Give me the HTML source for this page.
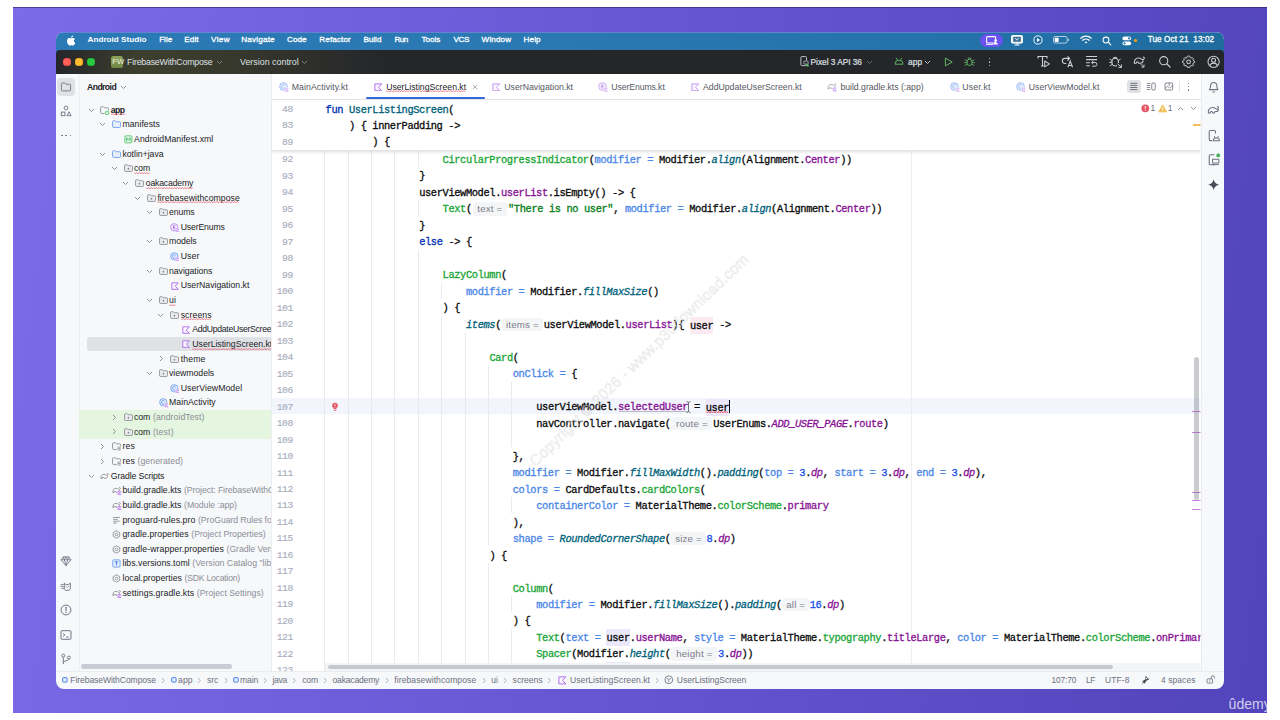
<!DOCTYPE html>
<html lang="en"><head><meta charset="utf-8"><title>Android Studio - UserListingScreen.kt</title>
<style>
html,body{margin:0;padding:0;background:#fff;}
body{width:1280px;height:720px;position:relative;overflow:hidden;font-family:"Liberation Sans",sans-serif;}
#bg{position:absolute;left:13px;top:7px;width:1254px;height:706px;background:linear-gradient(97deg,#7d6ae8 0%,#6755d2 50%,#5244bb 100%);}
#bg:before{content:"";position:absolute;left:0;top:0;right:0;height:1px;background:rgba(40,30,90,.55);}
#win{position:absolute;left:0;top:0;width:1280px;height:720px;clip-path:inset(32px 56px 31px 56px round 8px);}
#win div,#win span,#win svg{position:absolute;}
#win span{white-space:pre;line-height:12px;}
.wv{text-decoration:underline wavy #e8606e;text-decoration-thickness:.6px;text-underline-offset:1.6px;text-decoration-skip-ink:none;}
.cl{font-family:"Liberation Mono",monospace;font-size:10.4px;letter-spacing:-.390px;line-height:14px !important;color:#0b0b0c;-webkit-text-stroke:.3px currentColor;}
.ln{font-family:"Liberation Mono",monospace;font-size:9.7px;letter-spacing:-.400px;line-height:14px !important;color:#a9aebd;-webkit-text-stroke:.15px currentColor;}
.cl i{font-style:normal;}
.cl .k{color:#0033b3;}.cl .f{color:#00627a;}.cl .c{color:#17a535;}.cl .s{color:#067d17;}
.cl .a{color:#4a86e8;}.cl .p{color:#871094;}.cl .pi{color:#871094;font-style:italic;}
.cl .e{color:#00627a;font-style:italic;}.cl .n{color:#1750eb;}
.cl .hp{background:#fbeaf2;padding:2.6px 0 2.4px;}.cl .hv{background:#ece8fb;padding:2.6px 0 2.4px;}
.cl .h{display:inline-block;box-sizing:border-box;height:13.4px;line-height:13.2px;margin:0 .8px;vertical-align:.4px;background:#f4f5f7;border-radius:2.5px;color:#7b7e88;font-family:"Liberation Sans",sans-serif;font-size:9.7px;letter-spacing:.2px;-webkit-text-stroke:0;text-align:center;}
.ul{text-decoration:underline;text-decoration-color:#8a8d96;text-decoration-thickness:.6px;text-underline-offset:1.4px;}
</style></head><body>
<div id="bg"></div>
<div id="win">
<div style="left:56px;top:32px;width:1168px;height:657px;background:#f7f8fa;"></div>
<div style="left:56px;top:32px;width:1168px;height:24px;background:linear-gradient(90deg,#2b7ab6 0%,#2a79b3 40%,#2473aa 75%,#1f6c9f 100%);"></div>
<div style="left:56px;top:32px;width:1168px;height:1px;background:rgba(150,140,240,.55);"></div>
<div style="left:56px;top:50px;width:1168px;height:23.7px;background:#25262a;border-radius:4px 4px 0 0;"></div>
<div style="left:56px;top:50px;width:330px;height:23.7px;background:linear-gradient(90deg,rgba(75,78,40,0) 0%,rgba(84,86,48,.52) 26%,rgba(80,82,48,.40) 55%,rgba(60,62,40,0) 100%);border-radius:4px 0 0 0;"></div>
<div style="left:271.5px;top:73.7px;width:929px;height:598px;background:#ffffff;"></div>
<div style="left:78.6px;top:73.7px;width:1px;height:597.5px;background:#eeeff2;"></div>
<div style="left:271px;top:73.7px;width:1px;height:597.5px;background:#ecedf0;"></div>
<div style="left:1200.5px;top:73.7px;width:1px;height:597.5px;background:#ebecf0;"></div>
<div style="left:56px;top:671px;width:1168px;height:1px;background:#ebecf0;"></div>
<div style="left:271.5px;top:99px;width:929px;height:1px;background:#e4e5e9;"></div>
<svg style="left:66px;top:34.6px;" width="10" height="11" viewBox="0 0 10 11" fill="none"><path fill="#fff" d="M7.9 5.85c0-1.3 1.05-1.9 1.1-1.95-.6-.87-1.53-1-1.86-1-.8-.08-1.55.47-1.95.47-.4 0-1.02-.46-1.68-.45-.86.01-1.66.5-2.1 1.28-.9 1.55-.23 3.85.64 5.1.43.62.93 1.3 1.6 1.28.64-.03.88-.41 1.66-.41.77 0 .99.41 1.67.4.69-.01 1.13-.62 1.55-1.24.49-.71.69-1.4.7-1.44-.02 0-1.34-.51-1.35-2.04zM6.63 2.07c.35-.43.59-1.02.52-1.62-.51.02-1.12.34-1.49.77-.32.38-.61.99-.53 1.57.57.05 1.15-.29 1.5-.72z"/></svg>
<span style="top:33.70px;font-size:8.1px;color:#ffffff;left:87.60px;letter-spacing:0.027px;font-weight:700;">Android Studio</span>
<span style="top:33.70px;font-size:8.1px;color:#ffffff;left:159.20px;letter-spacing:-0.014px;-webkit-text-stroke:.3px #fff;">File</span>
<span style="top:33.70px;font-size:8.1px;color:#ffffff;left:184.20px;letter-spacing:0.151px;-webkit-text-stroke:.3px #fff;">Edit</span>
<span style="top:33.70px;font-size:8.1px;color:#ffffff;left:211.00px;letter-spacing:0.401px;-webkit-text-stroke:.3px #fff;">View</span>
<span style="top:33.70px;font-size:8.1px;color:#ffffff;left:241.20px;letter-spacing:0.208px;-webkit-text-stroke:.3px #fff;">Navigate</span>
<span style="top:33.70px;font-size:8.1px;color:#ffffff;left:287.00px;letter-spacing:0.084px;-webkit-text-stroke:.3px #fff;">Code</span>
<span style="top:33.70px;font-size:8.1px;color:#ffffff;left:319.30px;letter-spacing:0.116px;-webkit-text-stroke:.3px #fff;">Refactor</span>
<span style="top:33.70px;font-size:8.1px;color:#ffffff;left:363.40px;-webkit-text-stroke:.3px #fff;">Build</span>
<span style="top:33.70px;font-size:8.1px;color:#ffffff;left:394.50px;letter-spacing:-0.524px;-webkit-text-stroke:.3px #fff;">Run</span>
<span style="top:33.70px;font-size:8.1px;color:#ffffff;left:421.40px;letter-spacing:0.027px;-webkit-text-stroke:.3px #fff;">Tools</span>
<span style="top:33.70px;font-size:8.1px;color:#ffffff;left:453.60px;letter-spacing:-0.471px;-webkit-text-stroke:.3px #fff;">VCS</span>
<span style="top:33.70px;font-size:8.1px;color:#ffffff;left:481.60px;letter-spacing:0.143px;-webkit-text-stroke:.3px #fff;">Window</span>
<span style="top:33.70px;font-size:8.1px;color:#ffffff;left:523.60px;letter-spacing:0.118px;-webkit-text-stroke:.3px #fff;">Help</span>
<div style="left:979.8px;top:33.8px;width:22.8px;height:13px;background:#6a52f2;border-radius:6.5px;"></div>
<svg style="left:985.5px;top:36px;" width="12" height="9" viewBox="0 0 12 9" fill="none"><rect x=".6" y=".6" width="9" height="6.4" rx="1" stroke="#fff" stroke-width="1.1"/><circle cx="9.6" cy="4.6" r="1.3" fill="#fff"/><path d="M7.2 8.6c.2-1.5 1.2-2.1 2.4-2.1s2.2.6 2.4 2.1z" fill="#fff"/><path d="M0 8.4h7" stroke="#fff" stroke-width=".9"/></svg>
<svg style="left:1010.5px;top:35px;" width="12" height="11" viewBox="0 0 12 11" fill="none"><rect x=".5" y=".5" width="11" height="7.6" rx="1" fill="#e9f1f7" stroke="#fff"/><rect x="2.2" y="1.8" width="7.6" height="5" fill="#3d6f94"/><path d="M4.2 3l1.8 2.2L7.8 3" stroke="#fff" stroke-width=".8"/><path d="M6 8.1v1.6M3.5 10h5" stroke="#fff" stroke-width="1"/></svg>
<svg style="left:1032.5px;top:35.2px;" width="10" height="10" viewBox="0 0 10 10" fill="none"><circle cx="5" cy="5" r="4.1" stroke="#fff" stroke-width=".9"/><path d="M4 3.1v3.8L7.1 5z" fill="#fff"/></svg>
<svg style="left:1053px;top:36.2px;" width="17" height="8" viewBox="0 0 17 8" fill="none"><rect x=".5" y=".5" width="13.6" height="6.6" rx="1.8" stroke="rgba(255,255,255,.75)" stroke-width=".9"/><rect x="1.7" y="1.7" width="4" height="4.2" rx=".9" fill="#fff"/><path d="M15.2 2.6v2.6c.7-.2 1-.7 1-1.3s-.3-1.1-1-1.3z" fill="rgba(255,255,255,.75)"/></svg>
<svg style="left:1079.5px;top:35.4px;" width="12" height="9" viewBox="0 0 12 9" fill="none"><path d="M.8 3.2a7.4 7.4 0 0 1 10.4 0" stroke="#fff" stroke-width="1.25" stroke-linecap="round"/><path d="M2.8 5.3a4.6 4.6 0 0 1 6.4 0" stroke="#fff" stroke-width="1.25" stroke-linecap="round"/><path d="M4.7 7.2a1.9 1.9 0 0 1 2.6 0L6 8.6z" fill="#fff"/></svg>
<svg style="left:1101.8px;top:35.6px;" width="10" height="10" viewBox="0 0 10 10" fill="none"><circle cx="4" cy="4" r="2.9" stroke="#fff" stroke-width="1.05"/><path d="M6.2 6.2l2.6 2.6" stroke="#fff" stroke-width="1.2" stroke-linecap="round"/></svg>
<svg style="left:1122px;top:35.6px;" width="10" height="10" viewBox="0 0 10 10" fill="none"><rect x=".5" y=".6" width="8.6" height="3.7" rx="1.85" fill="#fff"/><circle cx="7.1" cy="2.45" r="1.1" fill="#2a76ad"/><rect x=".5" y="5.5" width="8.6" height="3.7" rx="1.85" fill="#fff"/><circle cx="2.5" cy="7.35" r="1.1" fill="#2a76ad"/></svg>
<div style="left:1134.3px;top:39.2px;width:2.6px;height:2.6px;background:#ff9f0a;border-radius:2px;"></div>
<span style="top:33.70px;font-size:8.2px;color:#fff;left:1147.70px;letter-spacing:0.073px;-webkit-text-stroke:.3px #fff;">Tue Oct 21  13:02</span>
<div style="left:63.0px;top:58.199999999999996px;width:7.6px;height:7.6px;background:#ff5f57;border-radius:50%;box-shadow:inset 0 0 0 .4px #e0443e;"></div>
<div style="left:75.10000000000001px;top:58.199999999999996px;width:7.6px;height:7.6px;background:#febc2e;border-radius:50%;box-shadow:inset 0 0 0 .4px #dea123;"></div>
<div style="left:87.10000000000001px;top:58.199999999999996px;width:7.6px;height:7.6px;background:#28c840;border-radius:50%;box-shadow:inset 0 0 0 .4px #1aab29;"></div>
<div style="left:111.3px;top:55.8px;width:12px;height:12px;background:linear-gradient(180deg,#8fa35c,#6f8840);border-radius:2.6px;"></div>
<span style="top:55.90px;font-size:7.7px;color:#eef2e2;left:112.30px;font-family:"Liberation Mono", monospace;letter-spacing:-.45px;">FW</span>
<span style="top:55.50px;font-size:8.8px;color:#dfe1e5;left:127.00px;letter-spacing:-0.209px;">FirebaseWithCompose</span>
<svg style="left:215.5px;top:59.6px;" width="7" height="5" viewBox="0 0 7 5" fill="none"><path d="M1 1l2.5 2.5L6 1" stroke="#868a91" stroke-width=".9"/></svg>
<span style="top:55.50px;font-size:8.8px;color:#dfe1e5;left:240.00px;letter-spacing:0.037px;">Version control</span>
<svg style="left:300.8px;top:59.6px;" width="7" height="5" viewBox="0 0 7 5" fill="none"><path d="M1 1l2.5 2.5L6 1" stroke="#868a91" stroke-width=".9"/></svg>
<svg style="left:799.5px;top:56.4px;" width="9" height="11" viewBox="0 0 9 11" fill="none"><rect x=".9" y=".6" width="5.6" height="9" rx=".9" stroke="#ced0d6" stroke-width=".9"/><rect x="3.4" y="4.6" width="4.8" height="3.6" fill="#25262a"/><rect x="3.9" y="5.1" width="4.2" height="3" rx=".5" stroke="#ced0d6" stroke-width=".7"/><circle cx="7.6" cy="9.4" r="1.2" fill="#57c55b"/></svg>
<span style="top:55.50px;font-size:8.3px;color:#dfe1e5;left:810.60px;letter-spacing:-0.024px;-webkit-text-stroke:.2px #dfe1e5;">Pixel 3 API 36</span>
<svg style="left:866px;top:59.6px;" width="7" height="5" viewBox="0 0 7 5" fill="none"><path d="M1 1l2.5 2.5L6 1" stroke="#6f737a" stroke-width=".9"/></svg>
<svg style="left:894.3px;top:57.2px;" width="10" height="8" viewBox="0 0 10 8" fill="none"><path d="M1 7.2a4 4 0 0 1 8 0z" stroke="#5fb865" stroke-width=".95" stroke-linejoin="round"/><path d="M2.3 1l1.1 1.9M7.7 1L6.6 2.9" stroke="#5fb865" stroke-width=".9" stroke-linecap="round"/></svg>
<span style="top:55.50px;font-size:8.3px;color:#dfe1e5;left:908.00px;letter-spacing:0.178px;-webkit-text-stroke:.2px #dfe1e5;">app</span>
<svg style="left:924.3px;top:59.6px;" width="7" height="5" viewBox="0 0 7 5" fill="none"><path d="M1 1l2.5 2.5L6 1" stroke="#ced0d6" stroke-width=".9"/></svg>
<svg style="left:943.6px;top:56.8px;" width="10" height="10" viewBox="0 0 10 10" fill="none"><path d="M1.4 1.1v7.8L8.2 5z" stroke="#5fb865" stroke-width="1" stroke-linejoin="round"/></svg>
<svg style="left:964.2px;top:56.3px;" width="11" height="11" viewBox="0 0 11 11" fill="none"><ellipse cx="5.5" cy="6.3" rx="2.6" ry="3.2" stroke="#5fb865" stroke-width=".95"/><path d="M4 2.9a1.6 1.6 0 0 1 3 0" stroke="#5fb865" stroke-width=".9"/><path d="M2.9 5L.9 4M2.8 6.6H.6M3 8.3l-2 1.1M8.1 5l2-1M8.2 6.6h2.2M8 8.3l2 1.1" stroke="#5fb865" stroke-width=".8" stroke-linecap="round"/></svg>
<div style="left:988.6px;top:57.699999999999996px;width:1.5px;height:1.5px;background:#ced0d6;border-radius:1px;"></div>
<div style="left:988.6px;top:61.099999999999994px;width:1.5px;height:1.5px;background:#ced0d6;border-radius:1px;"></div>
<div style="left:988.6px;top:64.5px;width:1.5px;height:1.5px;background:#ced0d6;border-radius:1px;"></div>
<svg style="left:1036.7px;top:55.099999999999994px;" width="13.2" height="13.2" viewBox="0 0 12 12" fill="none"><path d="M.9 3.1V1.300h8.200v1.800M5 1.300v8.600M3.600 10h2.800" stroke="#ced0d6" stroke-width="1"/><path d="M7 5.400v5.400L11.300 8.100z" stroke="#ced0d6" stroke-width=".95" stroke-linejoin="round" fill="#25262a"/></svg>
<svg style="left:1060.9px;top:55.099999999999994px;" width="13.2" height="13.2" viewBox="0 0 12 12" fill="none"><path d="M7.600 3.100H3.500a2.300 2.300 0 0 0 0 4.600h.9" stroke="#ced0d6" stroke-width="1" stroke-linecap="round"/><path d="M5.900 1.200l1.900 1.900-1.900 1.900" stroke="#ced0d6" stroke-width="1"/><path d="M6.300 11.200l2.100-5.600 2.100 5.600M7 9.500h2.800" stroke="#ced0d6" stroke-width="1"/></svg>
<svg style="left:1085.1000000000001px;top:55.099999999999994px;" width="13.2" height="13.2" viewBox="0 0 12 12" fill="none"><path d="M1 1.4h10M1 4.2h10M1 7h3.4M1 9.8h3.4" stroke="#ced0d6" stroke-width=".95"/><path d="M6 6.8h3.2a1.7 1.7 0 0 1 0 3.4H6.6M7.6 5.4L6 6.8l1.6 1.4" stroke="#ced0d6" stroke-width=".9"/></svg>
<svg style="left:1109.4px;top:55.099999999999994px;" width="13.2" height="13.2" viewBox="0 0 12 12" fill="none"><ellipse cx="5.600" cy="6.500" rx="3" ry="3.500" stroke="#ced0d6" stroke-width="1"/><path d="M3.900 3.200a1.800 1.800 0 0 1 3.400 0" stroke="#ced0d6" stroke-width=".95"/><path d="M2.700 5L.9 3.900M2.600 6.700H.5M2.800 8.600L1 9.800M8.500 5l1.800-1.100" stroke="#ced0d6" stroke-width=".85" stroke-linecap="round"/><rect x="7.400" y="7.400" width="4.600" height="4.600" fill="#25262a"/><path d="M8 8l3.200 3.200M11.300 8.600v2.700H8.600" stroke="#ced0d6" stroke-width=".9"/></svg>
<svg style="left:1133.4px;top:55.099999999999994px;" width="13.2" height="13.2" viewBox="0 0 12 12" fill="none"><path d="M1.2 7.6c-.4-2.6 1.2-4.8 3.8-4.8 1.6 0 2.4.7 3.2 1.2.9.5 2.1-.2 2.1-1.2 0-.6-.5-1-1-1" stroke="#ced0d6" stroke-width=".95" stroke-linecap="round"/><path d="M1.2 7.6h1.6l.5-1.2h1.3l.5 1.2h1.5c1.7 0 2.6-1.3 2.6-2.8" stroke="#ced0d6" stroke-width=".95" stroke-linejoin="round"/><path d="M7 8.2l2.8 2.8M10 8.6V11H7.6" stroke="#ced0d6" stroke-width=".85"/></svg>
<svg style="left:1158.1000000000001px;top:55.099999999999994px;" width="13.2" height="13.2" viewBox="0 0 12 12" fill="none"><circle cx="5.2" cy="5.2" r="3.7" stroke="#ced0d6" stroke-width="1"/><path d="M8 8l3 3" stroke="#ced0d6" stroke-width="1.1" stroke-linecap="round"/></svg>
<svg style="left:1182.4px;top:55.099999999999994px;" width="13.2" height="13.2" viewBox="0 0 12 12" fill="none"><path d="M6 .9l1.2.3.4 1.2 1.1.6 1.2-.4.9.9-.4 1.2.6 1.1 1.2.4v1.2l-1.2.4-.6 1.1.4 1.2-.9.9-1.2-.4-1.1.6-.4 1.2H4.800l-.4-1.200-1.100-.600-1.200.400-.900-.900.400-1.200-.600-1.100L-.2 7.400V6.200l1.200-.400.600-1.100-.400-1.200.900-.900 1.200.400 1.100-.600.400-1.200z" transform="translate(.6 .1) scale(.9)" stroke="#ced0d6" stroke-width="1" stroke-linejoin="round"/><circle cx="6" cy="6.2" r="1.7" stroke="#ced0d6" stroke-width=".95"/></svg>
<svg style="left:1207.0px;top:55.099999999999994px;" width="13.2" height="13.2" viewBox="0 0 12 12" fill="none"><circle cx="6" cy="6.2" r="5.1" stroke="#ced0d6" stroke-width=".95"/><circle cx="6" cy="4.8" r="1.8" stroke="#ced0d6" stroke-width=".95"/><path d="M2.5 9.8c.6-1.7 1.900-2.400 3.500-2.400s2.900.7 3.500 2.400" stroke="#ced0d6" stroke-width=".95"/></svg>
<div style="left:57.2px;top:77.5px;width:18.1px;height:18.1px;background:#dfe1e5;border-radius:4px;"></div>
<svg style="left:60.3px;top:80.8px;" width="12" height="12" viewBox="0 0 12 12" fill="none"><path transform="translate(.6 .5) scale(.9)" d="M.9 2.6c0-.6.4-1 1-1h2.600l1.300 1.400h4.300c.6 0 1 .4 1 1v5.400c0 .6-.4 1-1 1H1.900c-.6 0-1-.4-1-1z" stroke="#6c707e" stroke-width=".95" stroke-linejoin="round"/></svg>
<svg style="left:60.3px;top:105.0px;" width="12" height="12" viewBox="0 0 12 12" fill="none"><circle cx="6" cy="3" r="1.9" stroke="#6c707e" stroke-width=".9"/><rect x="1.300" y="7.100" width="3.600" height="3.600" stroke="#6c707e" stroke-width=".9"/><path d="M9 6.800l2.100 3.900H6.900z" stroke="#6c707e" stroke-width=".9" stroke-linejoin="round"/></svg>
<div style="left:61.3px;top:134.5px;width:1.8px;height:1.8px;background:#6c707e;border-radius:1px;"></div>
<div style="left:65.39999999999999px;top:134.5px;width:1.8px;height:1.8px;background:#6c707e;border-radius:1px;"></div>
<div style="left:69.49999999999999px;top:134.5px;width:1.8px;height:1.8px;background:#6c707e;border-radius:1px;"></div>
<svg style="left:60.3px;top:555.2px;" width="12" height="12" viewBox="0 0 12 12" fill="none"><path d="M3.300 1.800h5.400L11 4.800 6 10.600 1 4.800zM1 4.800h10M4.300 4.800L6 10.600l1.700-5.800M3.300 1.800l1 3 1.700-3 1.700 3 1-3" stroke="#6c707e" stroke-width=".8" stroke-linejoin="round"/></svg>
<svg style="left:60.3px;top:580.2px;" width="12" height="12" viewBox="0 0 12 12" fill="none"><path d="M4.300 3.100l1.700 1.500h2.600l1.700-1.500v5.200c0 1.200-.9 2.100-2.100 2.100H6.400c-1.200 0-2.100-.900-2.100-2.100z" stroke="#6c707e" stroke-width=".9" stroke-linejoin="round"/><path d="M.6 4.600h3M.6 6.600h3M1.600 8.600h2.200" stroke="#6c707e" stroke-width=".85"/><path d="M6.200 6.600l.5.500M8.400 6.600l-.5.500" stroke="#6c707e" stroke-width=".8" stroke-linecap="round"/></svg>
<svg style="left:60.3px;top:604.2px;" width="12" height="12" viewBox="0 0 12 12" fill="none"><circle cx="6" cy="6" r="4.900" stroke="#6c707e" stroke-width=".95"/><path d="M6 3.200v3.500" stroke="#6c707e" stroke-width="1.100" stroke-linecap="round"/><circle cx="6" cy="8.500" r=".7" fill="#6c707e"/></svg>
<svg style="left:60.3px;top:628.8px;" width="12" height="12" viewBox="0 0 12 12" fill="none"><rect x="1" y="1.700" width="10" height="8.600" rx="1" stroke="#6c707e" stroke-width=".95"/><path d="M3 4.300l1.900 1.600L3 7.500M6.100 8.100h2.600" stroke="#6c707e" stroke-width=".9"/></svg>
<svg style="left:60.3px;top:652.8px;" width="12" height="12" viewBox="0 0 12 12" fill="none"><circle cx="3.300" cy="2.600" r="1.500" stroke="#6c707e" stroke-width=".9"/><circle cx="8.900" cy="4.600" r="1.500" stroke="#6c707e" stroke-width=".9"/><path d="M3.300 4.100v7M3.300 9.400c0-1.900 5.600-1.300 5.600-3.300" stroke="#6c707e" stroke-width=".9"/></svg>
<div style="left:0;top:0;width:1280px;height:720px;clip-path:inset(73.7px 1009px 49px 79px);">
<span style="top:80.70px;font-size:8.7px;color:#1b1c1f;left:87.00px;letter-spacing:-0.599px;font-weight:700;">Android</span>
<svg style="left:119.6px;top:85px;" width="7" height="5" viewBox="0 0 7 5" fill="none"><path d="M1 1l2.500 2.500L6 1" stroke="#7f838c" stroke-width=".9"/></svg>
<div style="left:79.3px;top:410.2px;width:192px;height:29.2px;background:#e4f6df;"></div>
<div style="left:87px;top:337px;width:184px;height:13.7px;background:#dfe1e5;border-radius:3px 0 0 3px;"></div>
<svg style="left:87.5px;top:107.7px;" width="7" height="5" viewBox="0 0 7 5" fill="none"><path d="M1 1l2.500 2.500L6 1" stroke="#7f838c" stroke-width=".9"/></svg>
<svg style="left:100.25px;top:105.75px;" width="9.3" height="9.3" viewBox="0 0 10 10" fill="none"><path d="M.6 1.700c0-.5.400-.9.900-.9h2.100l1 1.100h3.700c.5 0 .9.400.9.900v4.300c0 .5-.4.900-.9.900H1.500c-.5 0-.9-.4-.9-.9z" stroke="#7f838c" stroke-width=".85" stroke-linejoin="round"/><rect x="5" y="4.800" width="5" height="5" fill="#f7f8fa"/><rect x="6" y="5.800" width="3.300" height="3.300" rx=".3" fill="#dff5e4" stroke="#4fc36b" stroke-width=".85"/></svg>
<span style="top:103.70px;font-size:8.7px;color:#1b1c1f;left:110.80px;letter-spacing:-0.647px;font-weight:700;">app</span>
<svg style="left:110.80px;top:113.35px;" width="15.3" height="2.6" viewBox="0 0 15.3 2.6" fill="none"><path d="M0.0 0.5L1.3 2.0L2.6 0.5L3.9 2.0L5.2 0.5L6.5 2.0L7.8 0.5L9.1 2.0L10.4 0.5L11.7 2.0L13.0 0.5L14.3 2.0" stroke="#e5505f" stroke-width="0.62"/></svg>
<svg style="left:99.15px;top:122.336px;" width="7" height="5" viewBox="0 0 7 5" fill="none"><path d="M1 1l2.500 2.500L6 1" stroke="#7f838c" stroke-width=".9"/></svg>
<svg style="left:111.9px;top:120.386px;" width="9.3" height="8.37" viewBox="0 0 10 9" fill="none"><path d="M.6 1.700c0-.5.400-.9.900-.9h2.100l1 1.100h3.700c.5 0 .9.400.9.900v4.300c0 .5-.4.900-.9.900H1.500c-.5 0-.9-.4-.9-.9z" fill="#e7effd" stroke="#5b93f0" stroke-width=".85" stroke-linejoin="round"/></svg>
<span style="top:118.34px;font-size:8.7px;color:#1b1c1f;left:122.45px;letter-spacing:0.028px;">manifests</span>
<svg style="left:123.55px;top:135.022px;" width="9.3" height="9.3" viewBox="0 0 10 10" fill="none"><rect x=".9" y=".9" width="7.600" height="7.600" rx="1" fill="#dff5e4" stroke="#4fc36b" stroke-width=".9"/><path d="M2.800 6.600V3.100l1.900 2.200 1.900-2.200v3.500" stroke="#3bb35a" stroke-width=".85" stroke-linejoin="round"/></svg>
<span style="top:132.97px;font-size:8.7px;color:#1b1c1f;left:134.10px;letter-spacing:0.025px;">AndroidManifest.xml</span>
<svg style="left:99.15px;top:151.608px;" width="7" height="5" viewBox="0 0 7 5" fill="none"><path d="M1 1l2.500 2.500L6 1" stroke="#7f838c" stroke-width=".9"/></svg>
<svg style="left:111.9px;top:149.65800000000002px;" width="9.3" height="8.37" viewBox="0 0 10 9" fill="none"><path d="M.6 1.700c0-.5.400-.9.900-.9h2.100l1 1.100h3.700c.5 0 .9.400.9.900v4.300c0 .5-.4.900-.9.900H1.500c-.5 0-.9-.4-.9-.9z" fill="#e7effd" stroke="#5b93f0" stroke-width=".85" stroke-linejoin="round"/></svg>
<span style="top:147.61px;font-size:8.7px;color:#1b1c1f;left:122.45px;letter-spacing:-0.014px;">kotlin+java</span>
<svg style="left:110.8px;top:166.24399999999997px;" width="7" height="5" viewBox="0 0 7 5" fill="none"><path d="M1 1l2.500 2.500L6 1" stroke="#7f838c" stroke-width=".9"/></svg>
<svg style="left:123.55px;top:164.29399999999998px;" width="9.3" height="8.37" viewBox="0 0 10 9" fill="none"><path d="M.6 1.700c0-.5.400-.9.900-.9h2.100l1 1.100h3.700c.5 0 .9.400.9.900v4.300c0 .5-.4.900-.9.900H1.500c-.5 0-.9-.4-.9-.9z" fill="#ebecf0" stroke="#7f838c" stroke-width=".85" stroke-linejoin="round"/><circle cx="4.800" cy="5" r=".9" fill="#7f838c"/></svg>
<span style="top:162.24px;font-size:8.7px;color:#1b1c1f;left:134.10px;letter-spacing:-0.131px;">com</span>
<svg style="left:134.10px;top:171.89px;" width="17.4" height="2.6" viewBox="0 0 17.4 2.6" fill="none"><path d="M0.0 0.5L1.3 2.0L2.6 0.5L3.9 2.0L5.2 0.5L6.5 2.0L7.8 0.5L9.1 2.0L10.4 0.5L11.7 2.0L13.0 0.5L14.3 2.0L15.6 0.5" stroke="#e5505f" stroke-width="0.62"/></svg>
<svg style="left:122.45px;top:180.88px;" width="7" height="5" viewBox="0 0 7 5" fill="none"><path d="M1 1l2.500 2.500L6 1" stroke="#7f838c" stroke-width=".9"/></svg>
<svg style="left:135.20000000000002px;top:178.93px;" width="9.3" height="8.37" viewBox="0 0 10 9" fill="none"><path d="M.6 1.700c0-.5.400-.9.900-.9h2.100l1 1.100h3.700c.5 0 .9.400.9.900v4.300c0 .5-.4.900-.9.900H1.500c-.5 0-.9-.4-.9-.9z" fill="#ebecf0" stroke="#7f838c" stroke-width=".85" stroke-linejoin="round"/><circle cx="4.800" cy="5" r=".9" fill="#7f838c"/></svg>
<span style="top:176.88px;font-size:8.7px;color:#1b1c1f;left:145.75px;letter-spacing:-0.179px;">oakacademy</span>
<svg style="left:145.75px;top:186.53px;" width="48.9" height="2.6" viewBox="0 0 48.9 2.6" fill="none"><path d="M0.0 0.5L1.3 2.0L2.6 0.5L3.9 2.0L5.2 0.5L6.5 2.0L7.8 0.5L9.1 2.0L10.4 0.5L11.7 2.0L13.0 0.5L14.3 2.0L15.6 0.5L16.9 2.0L18.2 0.5L19.5 2.0L20.8 0.5L22.1 2.0L23.4 0.5L24.7 2.0L26.0 0.5L27.3 2.0L28.6 0.5L29.9 2.0L31.2 0.5L32.5 2.0L33.8 0.5L35.1 2.0L36.4 0.5L37.7 2.0L39.0 0.5L40.3 2.0L41.6 0.5L42.9 2.0L44.2 0.5L45.5 2.0L46.8 0.5" stroke="#e5505f" stroke-width="0.62"/></svg>
<svg style="left:134.1px;top:195.516px;" width="7" height="5" viewBox="0 0 7 5" fill="none"><path d="M1 1l2.500 2.500L6 1" stroke="#7f838c" stroke-width=".9"/></svg>
<svg style="left:146.85000000000002px;top:193.566px;" width="9.3" height="8.37" viewBox="0 0 10 9" fill="none"><path d="M.6 1.700c0-.5.400-.9.900-.9h2.100l1 1.100h3.700c.5 0 .9.400.9.900v4.300c0 .5-.4.900-.9.900H1.500c-.5 0-.9-.4-.9-.9z" fill="#ebecf0" stroke="#7f838c" stroke-width=".85" stroke-linejoin="round"/><circle cx="4.800" cy="5" r=".9" fill="#7f838c"/></svg>
<span style="top:191.52px;font-size:8.7px;color:#1b1c1f;left:157.40px;letter-spacing:0.044px;">firebasewithcompose</span>
<svg style="left:157.40px;top:201.17px;" width="83.6" height="2.6" viewBox="0 0 83.6 2.6" fill="none"><path d="M0.0 0.5L1.3 2.0L2.6 0.5L3.9 2.0L5.2 0.5L6.5 2.0L7.8 0.5L9.1 2.0L10.4 0.5L11.7 2.0L13.0 0.5L14.3 2.0L15.6 0.5L16.9 2.0L18.2 0.5L19.5 2.0L20.8 0.5L22.1 2.0L23.4 0.5L24.7 2.0L26.0 0.5L27.3 2.0L28.6 0.5L29.9 2.0L31.2 0.5L32.5 2.0L33.8 0.5L35.1 2.0L36.4 0.5L37.7 2.0L39.0 0.5L40.3 2.0L41.6 0.5L42.9 2.0L44.2 0.5L45.5 2.0L46.8 0.5L48.1 2.0L49.4 0.5L50.7 2.0L52.0 0.5L53.3 2.0L54.6 0.5L55.9 2.0L57.2 0.5L58.5 2.0L59.8 0.5L61.1 2.0L62.4 0.5L63.7 2.0L65.0 0.5L66.3 2.0L67.6 0.5L68.9 2.0L70.2 0.5L71.5 2.0L72.8 0.5L74.1 2.0L75.4 0.5L76.7 2.0L78.0 0.5L79.3 2.0L80.6 0.5L81.9 2.0" stroke="#e5505f" stroke-width="0.62"/></svg>
<svg style="left:145.75px;top:210.152px;" width="7" height="5" viewBox="0 0 7 5" fill="none"><path d="M1 1l2.500 2.500L6 1" stroke="#7f838c" stroke-width=".9"/></svg>
<svg style="left:158.5px;top:208.202px;" width="9.3" height="8.37" viewBox="0 0 10 9" fill="none"><path d="M.6 1.700c0-.5.400-.9.900-.9h2.100l1 1.100h3.700c.5 0 .9.400.9.900v4.300c0 .5-.4.900-.9.900H1.500c-.5 0-.9-.4-.9-.9z" fill="#ebecf0" stroke="#7f838c" stroke-width=".85" stroke-linejoin="round"/><circle cx="4.800" cy="5" r=".9" fill="#7f838c"/></svg>
<span style="top:206.15px;font-size:8.7px;color:#1b1c1f;left:169.05px;letter-spacing:-0.106px;">enums</span>
<svg style="left:170.15000000000003px;top:222.838px;" width="10.23" height="9.3" viewBox="0 0 11 10" fill="none"><circle cx="4.600" cy="4.600" r="3.900" fill="#f6ecff" stroke="#b07af0" stroke-width=".85"/><path d="M5.800 3h-2v3.200h2M3.800 4.600h1.700" stroke="#a35ee8" stroke-width=".8"/><rect x="5.600" y="5.600" width="4.600" height="4.400" fill="#f7f8fa"/><path d="M6.400 6.300h3.200L8 7.900l1.600 1.600H6.400z" fill="#f3e6ff" stroke="#b77cf2" stroke-width=".7" stroke-linejoin="round"/></svg>
<span style="top:220.79px;font-size:8.7px;color:#1b1c1f;left:180.70px;letter-spacing:-0.154px;">UserEnums</span>
<svg style="left:145.75px;top:239.42399999999998px;" width="7" height="5" viewBox="0 0 7 5" fill="none"><path d="M1 1l2.500 2.500L6 1" stroke="#7f838c" stroke-width=".9"/></svg>
<svg style="left:158.5px;top:237.474px;" width="9.3" height="8.37" viewBox="0 0 10 9" fill="none"><path d="M.6 1.700c0-.5.400-.9.900-.9h2.100l1 1.100h3.700c.5 0 .9.400.9.900v4.300c0 .5-.4.900-.9.900H1.500c-.5 0-.9-.4-.9-.9z" fill="#ebecf0" stroke="#7f838c" stroke-width=".85" stroke-linejoin="round"/><circle cx="4.800" cy="5" r=".9" fill="#7f838c"/></svg>
<span style="top:235.42px;font-size:8.7px;color:#1b1c1f;left:169.05px;letter-spacing:-0.071px;">models</span>
<svg style="left:170.15000000000003px;top:252.11px;" width="10.23" height="9.3" viewBox="0 0 11 10" fill="none"><circle cx="4.600" cy="4.600" r="3.900" fill="#e7effd" stroke="#5b93f0" stroke-width=".85"/><path d="M6 3.400a1.900 1.900 0 1 0 0 2.400" stroke="#5b93f0" stroke-width=".85" stroke-linecap="round"/><rect x="5.600" y="5.600" width="4.600" height="4.400" fill="#f7f8fa"/><path d="M6.400 6.300h3.200L8 7.900l1.600 1.600H6.400z" fill="#f3e6ff" stroke="#b77cf2" stroke-width=".7" stroke-linejoin="round"/></svg>
<span style="top:250.06px;font-size:8.7px;color:#1b1c1f;left:180.70px;letter-spacing:0.103px;">User</span>
<svg style="left:145.75px;top:268.69599999999997px;" width="7" height="5" viewBox="0 0 7 5" fill="none"><path d="M1 1l2.500 2.500L6 1" stroke="#7f838c" stroke-width=".9"/></svg>
<svg style="left:158.5px;top:266.746px;" width="9.3" height="8.37" viewBox="0 0 10 9" fill="none"><path d="M.6 1.700c0-.5.400-.9.900-.9h2.100l1 1.100h3.700c.5 0 .9.400.9.900v4.300c0 .5-.4.900-.9.900H1.500c-.5 0-.9-.4-.9-.9z" fill="#ebecf0" stroke="#7f838c" stroke-width=".85" stroke-linejoin="round"/><circle cx="4.800" cy="5" r=".9" fill="#7f838c"/></svg>
<span style="top:264.70px;font-size:8.7px;color:#1b1c1f;left:169.05px;letter-spacing:-0.055px;">navigations</span>
<svg style="left:170.55000000000004px;top:281.682px;" width="8.37" height="8.37" viewBox="0 0 9 9" fill="none"><path d="M.9.900h7L4.600 4.400l3.300 3.500H.9z" fill="#faf5ff" stroke="#a968ec" stroke-width=".95" stroke-linejoin="round"/></svg>
<span style="top:279.33px;font-size:8.7px;color:#1b1c1f;left:180.70px;letter-spacing:0.005px;">UserNavigation.kt</span>
<svg style="left:145.75px;top:297.968px;" width="7" height="5" viewBox="0 0 7 5" fill="none"><path d="M1 1l2.500 2.500L6 1" stroke="#7f838c" stroke-width=".9"/></svg>
<svg style="left:158.5px;top:296.01800000000003px;" width="9.3" height="8.37" viewBox="0 0 10 9" fill="none"><path d="M.6 1.700c0-.5.400-.9.900-.9h2.100l1 1.100h3.700c.5 0 .9.400.9.900v4.300c0 .5-.4.900-.9.900H1.500c-.5 0-.9-.4-.9-.9z" fill="#ebecf0" stroke="#7f838c" stroke-width=".85" stroke-linejoin="round"/><circle cx="4.800" cy="5" r=".9" fill="#7f838c"/></svg>
<span style="top:293.97px;font-size:8.7px;color:#1b1c1f;left:169.05px;letter-spacing:0.138px;">ui</span>
<svg style="left:169.05px;top:303.62px;" width="8.1" height="2.6" viewBox="0 0 8.1 2.6" fill="none"><path d="M0.0 0.5L1.3 2.0L2.6 0.5L3.9 2.0L5.2 0.5L6.5 2.0" stroke="#e5505f" stroke-width="0.62"/></svg>
<svg style="left:157.4px;top:312.604px;" width="7" height="5" viewBox="0 0 7 5" fill="none"><path d="M1 1l2.500 2.500L6 1" stroke="#7f838c" stroke-width=".9"/></svg>
<svg style="left:170.15000000000003px;top:310.654px;" width="9.3" height="8.37" viewBox="0 0 10 9" fill="none"><path d="M.6 1.700c0-.5.400-.9.900-.9h2.100l1 1.100h3.700c.5 0 .9.400.9.900v4.300c0 .5-.4.900-.9.900H1.500c-.5 0-.9-.4-.9-.9z" fill="#ebecf0" stroke="#7f838c" stroke-width=".85" stroke-linejoin="round"/><circle cx="4.800" cy="5" r=".9" fill="#7f838c"/></svg>
<span style="top:308.60px;font-size:8.7px;color:#1b1c1f;left:180.70px;letter-spacing:0.080px;">screens</span>
<svg style="left:180.70px;top:318.25px;" width="32.1" height="2.6" viewBox="0 0 32.1 2.6" fill="none"><path d="M0.0 0.5L1.3 2.0L2.6 0.5L3.9 2.0L5.2 0.5L6.5 2.0L7.8 0.5L9.1 2.0L10.4 0.5L11.7 2.0L13.0 0.5L14.3 2.0L15.6 0.5L16.9 2.0L18.2 0.5L19.5 2.0L20.8 0.5L22.1 2.0L23.4 0.5L24.7 2.0L26.0 0.5L27.3 2.0L28.6 0.5L29.9 2.0" stroke="#e5505f" stroke-width="0.62"/></svg>
<svg style="left:182.20000000000002px;top:325.59px;" width="8.37" height="8.37" viewBox="0 0 9 9" fill="none"><path d="M.9.900h7L4.600 4.400l3.300 3.500H.9z" fill="#faf5ff" stroke="#a968ec" stroke-width=".95" stroke-linejoin="round"/></svg>
<span style="top:323.24px;font-size:8.7px;color:#1b1c1f;left:192.35px;letter-spacing:-0.315px;">AddUpdateUserScreen.kt</span>
<svg style="left:182.20000000000002px;top:340.226px;" width="8.37" height="8.37" viewBox="0 0 9 9" fill="none"><path d="M.9.900h7L4.600 4.400l3.300 3.500H.9z" fill="#faf5ff" stroke="#a968ec" stroke-width=".95" stroke-linejoin="round"/></svg>
<span style="top:337.88px;font-size:8.7px;color:#1b1c1f;left:192.35px;letter-spacing:-0.013px;">UserListingScreen.kt</span>
<svg style="left:192.35px;top:347.53px;" width="81.1" height="2.6" viewBox="0 0 81.1 2.6" fill="none"><path d="M0.0 0.5L1.3 2.0L2.6 0.5L3.9 2.0L5.2 0.5L6.5 2.0L7.8 0.5L9.1 2.0L10.4 0.5L11.7 2.0L13.0 0.5L14.3 2.0L15.6 0.5L16.9 2.0L18.2 0.5L19.5 2.0L20.8 0.5L22.1 2.0L23.4 0.5L24.7 2.0L26.0 0.5L27.3 2.0L28.6 0.5L29.9 2.0L31.2 0.5L32.5 2.0L33.8 0.5L35.1 2.0L36.4 0.5L37.7 2.0L39.0 0.5L40.3 2.0L41.6 0.5L42.9 2.0L44.2 0.5L45.5 2.0L46.8 0.5L48.1 2.0L49.4 0.5L50.7 2.0L52.0 0.5L53.3 2.0L54.6 0.5L55.9 2.0L57.2 0.5L58.5 2.0L59.8 0.5L61.1 2.0L62.4 0.5L63.7 2.0L65.0 0.5L66.3 2.0L67.6 0.5L68.9 2.0L70.2 0.5L71.5 2.0L72.8 0.5L74.1 2.0L75.4 0.5L76.7 2.0L78.0 0.5L79.3 2.0" stroke="#e5505f" stroke-width="0.62"/></svg>
<svg style="left:158.6px;top:355.312px;" width="5" height="7" viewBox="0 0 5 7" fill="none"><path d="M1 1l2.500 2.500L1 6" stroke="#7f838c" stroke-width=".9"/></svg>
<svg style="left:170.15000000000003px;top:354.562px;" width="9.3" height="8.37" viewBox="0 0 10 9" fill="none"><path d="M.6 1.700c0-.5.400-.9.900-.9h2.100l1 1.100h3.700c.5 0 .9.400.9.900v4.300c0 .5-.4.900-.9.900H1.500c-.5 0-.9-.4-.9-.9z" fill="#ebecf0" stroke="#7f838c" stroke-width=".85" stroke-linejoin="round"/><circle cx="4.800" cy="5" r=".9" fill="#7f838c"/></svg>
<span style="top:352.51px;font-size:8.7px;color:#1b1c1f;left:180.70px;letter-spacing:0.126px;">theme</span>
<svg style="left:145.75px;top:371.14799999999997px;" width="7" height="5" viewBox="0 0 7 5" fill="none"><path d="M1 1l2.500 2.500L6 1" stroke="#7f838c" stroke-width=".9"/></svg>
<svg style="left:158.5px;top:369.198px;" width="9.3" height="8.37" viewBox="0 0 10 9" fill="none"><path d="M.6 1.700c0-.5.400-.9.900-.9h2.100l1 1.100h3.700c.5 0 .9.400.9.900v4.300c0 .5-.4.900-.9.900H1.500c-.5 0-.9-.4-.9-.9z" fill="#ebecf0" stroke="#7f838c" stroke-width=".85" stroke-linejoin="round"/><circle cx="4.800" cy="5" r=".9" fill="#7f838c"/></svg>
<span style="top:367.15px;font-size:8.7px;color:#1b1c1f;left:169.05px;letter-spacing:-0.026px;">viewmodels</span>
<svg style="left:170.15000000000003px;top:383.834px;" width="10.23" height="9.3" viewBox="0 0 11 10" fill="none"><circle cx="4.600" cy="4.600" r="3.900" fill="#e7effd" stroke="#5b93f0" stroke-width=".85"/><path d="M6 3.400a1.900 1.900 0 1 0 0 2.400" stroke="#5b93f0" stroke-width=".85" stroke-linecap="round"/><rect x="5.600" y="5.600" width="4.600" height="4.400" fill="#f7f8fa"/><path d="M6.400 6.300h3.200L8 7.900l1.600 1.600H6.400z" fill="#f3e6ff" stroke="#b77cf2" stroke-width=".7" stroke-linejoin="round"/></svg>
<span style="top:381.78px;font-size:8.7px;color:#1b1c1f;left:180.70px;letter-spacing:0.060px;">UserViewModel</span>
<svg style="left:158.5px;top:398.46999999999997px;" width="10.23" height="9.3" viewBox="0 0 11 10" fill="none"><circle cx="4.600" cy="4.600" r="3.900" fill="#e7effd" stroke="#5b93f0" stroke-width=".85"/><path d="M6 3.400a1.900 1.900 0 1 0 0 2.400" stroke="#5b93f0" stroke-width=".85" stroke-linecap="round"/><rect x="5.600" y="5.600" width="4.600" height="4.400" fill="#f7f8fa"/><path d="M6.400 6.300h3.200L8 7.900l1.600 1.600H6.400z" fill="#f3e6ff" stroke="#b77cf2" stroke-width=".7" stroke-linejoin="round"/></svg>
<span style="top:396.42px;font-size:8.7px;color:#1b1c1f;left:169.05px;letter-spacing:0.028px;">MainActivity</span>
<svg style="left:112.0px;top:413.856px;" width="5" height="7" viewBox="0 0 5 7" fill="none"><path d="M1 1l2.500 2.500L1 6" stroke="#7f838c" stroke-width=".9"/></svg>
<svg style="left:123.55px;top:413.106px;" width="9.3" height="8.37" viewBox="0 0 10 9" fill="none"><path d="M.6 1.700c0-.5.400-.9.900-.9h2.100l1 1.100h3.700c.5 0 .9.400.9.900v4.300c0 .5-.4.900-.9.900H1.500c-.5 0-.9-.4-.9-.9z" fill="#ebecf0" stroke="#7f838c" stroke-width=".85" stroke-linejoin="round"/><circle cx="4.800" cy="5" r=".9" fill="#7f838c"/></svg>
<span style="top:411.06px;font-size:8.7px;color:#1b1c1f;left:134.10px;letter-spacing:-0.131px;">com</span>
<span style="top:411.06px;font-size:8.7px;color:#8b8e98;left:152.95px;letter-spacing:0.058px;">(androidTest)</span>
<svg style="left:112.0px;top:428.49199999999996px;" width="5" height="7" viewBox="0 0 5 7" fill="none"><path d="M1 1l2.500 2.500L1 6" stroke="#7f838c" stroke-width=".9"/></svg>
<svg style="left:123.55px;top:427.74199999999996px;" width="9.3" height="8.37" viewBox="0 0 10 9" fill="none"><path d="M.6 1.700c0-.5.400-.9.900-.9h2.100l1 1.100h3.700c.5 0 .9.400.9.900v4.300c0 .5-.4.900-.9.900H1.500c-.5 0-.9-.4-.9-.9z" fill="#ebecf0" stroke="#7f838c" stroke-width=".85" stroke-linejoin="round"/><circle cx="4.800" cy="5" r=".9" fill="#7f838c"/></svg>
<span style="top:425.69px;font-size:8.7px;color:#1b1c1f;left:134.10px;letter-spacing:-0.131px;">com</span>
<span style="top:425.69px;font-size:8.7px;color:#8b8e98;left:152.95px;letter-spacing:0.172px;">(test)</span>
<svg style="left:100.35000000000001px;top:443.128px;" width="5" height="7" viewBox="0 0 5 7" fill="none"><path d="M1 1l2.500 2.500L1 6" stroke="#7f838c" stroke-width=".9"/></svg>
<svg style="left:111.9px;top:442.378px;" width="9.3" height="9.3" viewBox="0 0 10 10" fill="none"><path d="M.6 1.700c0-.5.400-.9.900-.9h2.100l1 1.100h3.700c.5 0 .9.400.9.900v4.300c0 .5-.4.900-.9.900H1.500c-.5 0-.9-.4-.9-.9z" stroke="#7f838c" stroke-width=".85" stroke-linejoin="round"/><rect x="5" y="4.600" width="5" height="5" fill="#f7f8fa"/><path d="M5.800 5.600h3.600M5.800 7.100h3.600M5.800 8.600h3.600" stroke="#7f838c" stroke-width=".8"/></svg>
<span style="top:440.33px;font-size:8.7px;color:#1b1c1f;left:122.45px;letter-spacing:0.166px;">res</span>
<svg style="left:100.35000000000001px;top:457.764px;" width="5" height="7" viewBox="0 0 5 7" fill="none"><path d="M1 1l2.500 2.500L1 6" stroke="#7f838c" stroke-width=".9"/></svg>
<svg style="left:111.9px;top:457.014px;" width="9.3" height="9.3" viewBox="0 0 10 10" fill="none"><path d="M.6 1.700c0-.5.400-.9.900-.9h2.100l1 1.100h3.700c.5 0 .9.400.9.900v4.300c0 .5-.4.900-.9.900H1.500c-.5 0-.9-.4-.9-.9z" stroke="#7f838c" stroke-width=".85" stroke-linejoin="round"/><rect x="5" y="4.600" width="5" height="5" fill="#f7f8fa"/><path d="M5.800 5.600h3.600M5.800 7.100h3.600M5.800 8.600h3.600" stroke="#7f838c" stroke-width=".8"/></svg>
<span style="top:454.96px;font-size:8.7px;color:#1b1c1f;left:122.45px;letter-spacing:0.166px;">res</span>
<span style="top:454.96px;font-size:8.7px;color:#8b8e98;left:137.55px;letter-spacing:0.049px;">(generated)</span>
<svg style="left:87.5px;top:473.59999999999997px;" width="7" height="5" viewBox="0 0 7 5" fill="none"><path d="M1 1l2.500 2.500L6 1" stroke="#7f838c" stroke-width=".9"/></svg>
<svg style="left:100.25px;top:471.65px;" width="10.23" height="9.3" viewBox="0 0 11 10" fill="none"><path d="M1 6.800c-.4-2.400 1-4.300 3.300-4.300 1.400 0 2.100.6 2.800 1 .8.500 1.900-.1 1.900-1 0-.6-.4-.9-.9-.9" stroke="#7f838c" stroke-width=".85" stroke-linecap="round"/><path d="M1 6.800h1.400l.4-1h1.200l.4 1h1.400c1.500 0 2.300-1.200 2.300-2.500" stroke="#7f838c" stroke-width=".85" stroke-linejoin="round"/></svg>
<span style="top:469.60px;font-size:8.7px;color:#1b1c1f;left:110.80px;letter-spacing:-0.107px;">Gradle Scripts</span>
<svg style="left:111.9px;top:486.286px;" width="10.23" height="9.3" viewBox="0 0 11 10" fill="none"><path d="M1 6.800c-.4-2.400 1-4.300 3.300-4.300 1.400 0 2.100.6 2.800 1 .8.500 1.900-.1 1.900-1 0-.6-.4-.9-.9-.9" stroke="#7f838c" stroke-width=".85" stroke-linecap="round"/><path d="M1 6.800h1.400l.4-1h1.200l.4 1h1.400c1.500 0 2.300-1.200 2.300-2.500" stroke="#7f838c" stroke-width=".85" stroke-linejoin="round"/><rect x="5.600" y="5.200" width="4.800" height="4.800" fill="#f7f8fa"/><path d="M6.400 6h3.200L8 7.600l1.600 1.600H6.400z" fill="#f3e6ff" stroke="#b060f0" stroke-width=".75" stroke-linejoin="round"/></svg>
<span style="top:484.24px;font-size:8.7px;color:#1b1c1f;left:122.45px;letter-spacing:0.031px;">build.gradle.kts</span>
<span style="top:484.24px;font-size:8.7px;color:#8b8e98;left:184.05px;letter-spacing:-0.090px;">(Project: FirebaseWithCompose)</span>
<svg style="left:111.9px;top:500.92199999999997px;" width="10.23" height="9.3" viewBox="0 0 11 10" fill="none"><path d="M1 6.800c-.4-2.400 1-4.300 3.300-4.300 1.400 0 2.100.6 2.800 1 .8.500 1.900-.1 1.900-1 0-.6-.4-.9-.9-.9" stroke="#7f838c" stroke-width=".85" stroke-linecap="round"/><path d="M1 6.800h1.400l.4-1h1.200l.4 1h1.400c1.500 0 2.300-1.200 2.300-2.500" stroke="#7f838c" stroke-width=".85" stroke-linejoin="round"/><rect x="5.600" y="5.200" width="4.800" height="4.800" fill="#f7f8fa"/><path d="M6.400 6h3.200L8 7.600l1.600 1.600H6.400z" fill="#f3e6ff" stroke="#b060f0" stroke-width=".75" stroke-linejoin="round"/></svg>
<span style="top:498.87px;font-size:8.7px;color:#1b1c1f;left:122.45px;letter-spacing:0.031px;">build.gradle.kts</span>
<span style="top:498.87px;font-size:8.7px;color:#8b8e98;left:184.05px;letter-spacing:-0.058px;">(Module :app)</span>
<svg style="left:111.9px;top:515.558px;" width="9.3" height="8.37" viewBox="0 0 10 9" fill="none"><path d="M1.200 1.600h7.200M1.200 3.600h5M1.200 5.600h7.200M1.200 7.600h4" stroke="#7f838c" stroke-width=".85"/></svg>
<span style="top:513.51px;font-size:8.7px;color:#1b1c1f;left:122.45px;letter-spacing:0.084px;">proguard-rules.pro</span>
<span style="top:513.51px;font-size:8.7px;color:#8b8e98;left:198.05px;letter-spacing:-0.066px;">(ProGuard Rules for &quot;:app&quot;)</span>
<svg style="left:111.9px;top:530.194px;" width="9.3" height="9.3" viewBox="0 0 10 10" fill="none"><path d="M4.800.8l3.500 2v4l-3.500 2-3.500-2v-4z" stroke="#7f838c" stroke-width=".85" stroke-linejoin="round"/><circle cx="4.800" cy="4.800" r="1.400" stroke="#7f838c" stroke-width=".8"/></svg>
<span style="top:528.14px;font-size:8.7px;color:#1b1c1f;left:122.45px;letter-spacing:0.060px;">gradle.properties</span>
<span style="top:528.14px;font-size:8.7px;color:#8b8e98;left:191.30px;letter-spacing:-0.023px;">(Project Properties)</span>
<svg style="left:111.9px;top:544.8299999999999px;" width="9.3" height="9.3" viewBox="0 0 10 10" fill="none"><path d="M4.800.8l3.500 2v4l-3.500 2-3.500-2v-4z" stroke="#7f838c" stroke-width=".85" stroke-linejoin="round"/><circle cx="4.800" cy="4.800" r="1.400" stroke="#7f838c" stroke-width=".8"/></svg>
<span style="top:542.78px;font-size:8.7px;color:#1b1c1f;left:122.45px;letter-spacing:0.100px;">gradle-wrapper.properties</span>
<span style="top:542.78px;font-size:8.7px;color:#8b8e98;left:226.55px;letter-spacing:-0.057px;">(Gradle Version)</span>
<svg style="left:111.9px;top:559.4659999999999px;" width="9.3" height="9.3" viewBox="0 0 10 10" fill="none"><rect x=".9" y=".9" width="7.800" height="7.800" rx="1" fill="#e7effd" stroke="#5b93f0" stroke-width=".85"/><path d="M3 3.100h3.600M4.800 3.100v3.800" stroke="#3574f0" stroke-width=".95"/></svg>
<span style="top:557.42px;font-size:8.7px;color:#1b1c1f;left:122.45px;letter-spacing:0.031px;">libs.versions.toml</span>
<span style="top:557.42px;font-size:8.7px;color:#8b8e98;left:192.30px;letter-spacing:0.029px;">(Version Catalog &quot;libs&quot;)</span>
<svg style="left:111.9px;top:574.102px;" width="9.3" height="9.3" viewBox="0 0 10 10" fill="none"><path d="M4.800.8l3.500 2v4l-3.500 2-3.500-2v-4z" stroke="#7f838c" stroke-width=".85" stroke-linejoin="round"/><circle cx="4.800" cy="4.800" r="1.400" stroke="#7f838c" stroke-width=".8"/></svg>
<span style="top:572.05px;font-size:8.7px;color:#1b1c1f;left:122.45px;letter-spacing:0.033px;">local.properties</span>
<span style="top:572.05px;font-size:8.7px;color:#8b8e98;left:184.55px;letter-spacing:-0.251px;">(SDK Location)</span>
<svg style="left:111.9px;top:588.738px;" width="10.23" height="9.3" viewBox="0 0 11 10" fill="none"><path d="M1 6.800c-.4-2.400 1-4.300 3.300-4.300 1.400 0 2.100.6 2.800 1 .8.500 1.900-.1 1.900-1 0-.6-.4-.9-.9-.9" stroke="#7f838c" stroke-width=".85" stroke-linecap="round"/><path d="M1 6.800h1.400l.4-1h1.200l.4 1h1.400c1.500 0 2.300-1.200 2.300-2.500" stroke="#7f838c" stroke-width=".85" stroke-linejoin="round"/><rect x="5.600" y="5.200" width="4.800" height="4.800" fill="#f7f8fa"/><path d="M6.400 6h3.200L8 7.600l1.600 1.600H6.400z" fill="#f3e6ff" stroke="#b060f0" stroke-width=".75" stroke-linejoin="round"/></svg>
<span style="top:586.69px;font-size:8.7px;color:#1b1c1f;left:122.45px;letter-spacing:0.091px;">settings.gradle.kts</span>
<span style="top:586.69px;font-size:8.7px;color:#8b8e98;left:196.80px;letter-spacing:0.016px;">(Project Settings)</span>
<div style="left:81.3px;top:664.3px;width:150.6px;height:4.5px;background:#c9ccd3;border-radius:2.300px;"></div>
</div>
<svg style="left:279.2px;top:82.3px;opacity:.72;" width="10.78" height="9.8" viewBox="0 0 11 10" fill="none"><circle cx="4.600" cy="4.600" r="3.900" fill="#e7effd" stroke="#5b93f0" stroke-width=".85"/><path d="M6 3.400a1.900 1.900 0 1 0 0 2.400" stroke="#5b93f0" stroke-width=".85" stroke-linecap="round"/><rect x="5.600" y="5.600" width="4.600" height="4.400" fill="#fff"/><path d="M6.400 6.300h3.200L8 7.900l1.600 1.600H6.400z" fill="#f3e6ff" stroke="#b77cf2" stroke-width=".7" stroke-linejoin="round"/></svg>
<span style="top:80.60px;font-size:8.7px;color:#555862;left:291.70px;letter-spacing:0.102px;">MainActivity.kt</span>
<svg style="left:373.7px;top:82.6px;" width="8.82" height="8.82" viewBox="0 0 9 9" fill="none"><path d="M.9.900h7L4.600 4.400l3.300 3.500H.9z" fill="#faf5ff" stroke="#a968ec" stroke-width=".95" stroke-linejoin="round"/></svg>
<span style="top:80.60px;font-size:8.7px;color:#1b1c1f;left:386.20px;letter-spacing:-0.013px;">UserListingScreen.kt</span>
<svg style="left:386.20px;top:90.25px;" width="81.1" height="2.6" viewBox="0 0 81.1 2.6" fill="none"><path d="M0.0 0.5L1.3 2.0L2.6 0.5L3.9 2.0L5.2 0.5L6.5 2.0L7.8 0.5L9.1 2.0L10.4 0.5L11.7 2.0L13.0 0.5L14.3 2.0L15.6 0.5L16.9 2.0L18.2 0.5L19.5 2.0L20.8 0.5L22.1 2.0L23.4 0.5L24.7 2.0L26.0 0.5L27.3 2.0L28.6 0.5L29.9 2.0L31.2 0.5L32.5 2.0L33.8 0.5L35.1 2.0L36.4 0.5L37.7 2.0L39.0 0.5L40.3 2.0L41.6 0.5L42.9 2.0L44.2 0.5L45.5 2.0L46.8 0.5L48.1 2.0L49.4 0.5L50.7 2.0L52.0 0.5L53.3 2.0L54.6 0.5L55.9 2.0L57.2 0.5L58.5 2.0L59.8 0.5L61.1 2.0L62.4 0.5L63.7 2.0L65.0 0.5L66.3 2.0L67.6 0.5L68.9 2.0L70.2 0.5L71.5 2.0L72.8 0.5L74.1 2.0L75.4 0.5L76.7 2.0L78.0 0.5L79.3 2.0" stroke="#e5505f" stroke-width="0.62"/></svg>
<svg style="left:491.7px;top:82.6px;opacity:.72;" width="8.82" height="8.82" viewBox="0 0 9 9" fill="none"><path d="M.9.900h7L4.600 4.400l3.300 3.500H.9z" fill="#faf5ff" stroke="#a968ec" stroke-width=".95" stroke-linejoin="round"/></svg>
<span style="top:80.60px;font-size:8.7px;color:#555862;left:504.30px;letter-spacing:0.009px;">UserNavigation.kt</span>
<svg style="left:598.3000000000001px;top:82.3px;opacity:.72;" width="10.78" height="9.8" viewBox="0 0 11 10" fill="none"><circle cx="4.600" cy="4.600" r="3.900" fill="#f6ecff" stroke="#b07af0" stroke-width=".85"/><path d="M5.800 3h-2v3.200h2M3.800 4.600h1.700" stroke="#a35ee8" stroke-width=".8"/><rect x="5.600" y="5.600" width="4.600" height="4.400" fill="#fff"/><path d="M6.400 6.300h3.200L8 7.900l1.600 1.600H6.400z" fill="#f3e6ff" stroke="#b77cf2" stroke-width=".7" stroke-linejoin="round"/></svg>
<span style="top:80.60px;font-size:8.7px;color:#555862;left:611.20px;letter-spacing:-0.086px;">UserEnums.kt</span>
<svg style="left:690.5px;top:82.6px;opacity:.72;" width="8.82" height="8.82" viewBox="0 0 9 9" fill="none"><path d="M.9.900h7L4.600 4.400l3.300 3.500H.9z" fill="#faf5ff" stroke="#a968ec" stroke-width=".95" stroke-linejoin="round"/></svg>
<span style="top:80.60px;font-size:8.7px;color:#555862;left:703.00px;letter-spacing:0.009px;">AddUpdateUserScreen.kt</span>
<svg style="left:826.6px;top:82.3px;opacity:.72;" width="10.78" height="9.8" viewBox="0 0 11 10" fill="none"><path d="M1 6.800c-.4-2.400 1-4.300 3.300-4.300 1.400 0 2.100.6 2.800 1 .8.500 1.900-.1 1.900-1 0-.6-.4-.9-.9-.9" stroke="#7f838c" stroke-width=".85" stroke-linecap="round"/><path d="M1 6.800h1.400l.4-1h1.200l.4 1h1.400c1.500 0 2.300-1.200 2.300-2.500" stroke="#7f838c" stroke-width=".85" stroke-linejoin="round"/><rect x="5.600" y="5.200" width="4.800" height="4.800" fill="#fff"/><path d="M6.400 6h3.200L8 7.600l1.600 1.600H6.400z" fill="#f3e6ff" stroke="#b060f0" stroke-width=".75" stroke-linejoin="round"/></svg>
<span style="top:80.60px;font-size:8.7px;color:#555862;left:840.40px;letter-spacing:-0.015px;">build.gradle.kts (:app)</span>
<svg style="left:949.8000000000001px;top:82.3px;opacity:.72;" width="10.78" height="9.8" viewBox="0 0 11 10" fill="none"><circle cx="4.600" cy="4.600" r="3.900" fill="#e7effd" stroke="#5b93f0" stroke-width=".85"/><path d="M6 3.400a1.900 1.900 0 1 0 0 2.400" stroke="#5b93f0" stroke-width=".85" stroke-linecap="round"/><rect x="5.600" y="5.600" width="4.600" height="4.400" fill="#fff"/><path d="M6.400 6.300h3.200L8 7.900l1.600 1.600H6.400z" fill="#f3e6ff" stroke="#b77cf2" stroke-width=".7" stroke-linejoin="round"/></svg>
<span style="top:80.60px;font-size:8.7px;color:#555862;left:962.30px;letter-spacing:0.178px;">User.kt</span>
<svg style="left:1015.8000000000001px;top:82.3px;opacity:.72;" width="10.78" height="9.8" viewBox="0 0 11 10" fill="none"><circle cx="4.600" cy="4.600" r="3.900" fill="#e7effd" stroke="#5b93f0" stroke-width=".85"/><path d="M6 3.400a1.900 1.900 0 1 0 0 2.400" stroke="#5b93f0" stroke-width=".85" stroke-linecap="round"/><rect x="5.600" y="5.600" width="4.600" height="4.400" fill="#fff"/><path d="M6.400 6.300h3.200L8 7.900l1.600 1.600H6.400z" fill="#f3e6ff" stroke="#b77cf2" stroke-width=".7" stroke-linejoin="round"/></svg>
<span style="top:80.60px;font-size:8.7px;color:#555862;left:1028.70px;letter-spacing:0.057px;">UserViewModel.kt</span>
<svg style="left:472px;top:84px;" width="6" height="6" viewBox="0 0 6 6" fill="none"><path d="M.8.800l4.400 4.400M5.200.800L.8 5.200" stroke="#9a9da6" stroke-width=".8"/></svg>
<div style="left:366.3px;top:97px;width:118.3px;height:2.4px;background:#3369d6;border-radius:1px;"></div>
<div style="left:1127px;top:80.2px;width:14.2px;height:12.8px;background:#dfe1e5;border-radius:3px;"></div>
<svg style="left:1129.4px;top:82.4px;" width="10" height="9" viewBox="0 0 10 9" fill="none"><path d="M1.300 1.300h7M1.300 3.400h7M1.300 5.500h7M1.300 7.600h7" stroke="#5a5d66" stroke-width=".85"/></svg>
<svg style="left:1146px;top:82.4px;" width="10" height="9" viewBox="0 0 10 9" fill="none"><path d="M.8 1.500h3.400M.8 3.500h3.400M.8 5.500h3.400M.8 7.500h3.400" stroke="#6c707e" stroke-width=".8"/><rect x="5.800" y="1.100" width="3.400" height="6.800" rx=".8" stroke="#6c707e" stroke-width=".85"/></svg>
<svg style="left:1163.6px;top:82.4px;" width="10" height="9" viewBox="0 0 10 9" fill="none"><rect x="1" y="1" width="7.600" height="7" rx="1" stroke="#6c707e" stroke-width=".85"/><path d="M1.200 6.600l2.400-2.400 2 2 2.800-2.800M5.200 1v3" stroke="#6c707e" stroke-width=".75"/></svg>
<div style="left:1178.7px;top:81px;width:1px;height:11.2px;background:#e4e5e9;"></div>
<div style="left:1188.1px;top:82.8px;width:1.4px;height:1.4px;background:#6c707e;border-radius:1px;"></div>
<div style="left:1188.1px;top:86.0px;width:1.4px;height:1.4px;background:#6c707e;border-radius:1px;"></div>
<div style="left:1188.1px;top:89.2px;width:1.4px;height:1.4px;background:#6c707e;border-radius:1px;"></div>
<svg style="left:1206.7px;top:79.89999999999999px;" width="13.4" height="13.4" viewBox="0 0 12 12" fill="none"><path d="M2.200 8.600c.8-.8 1-1.600 1-3.400 0-1.700 1.200-3 2.800-3s2.800 1.300 2.800 3c0 1.800.2 2.600 1 3.400z" stroke="#6c707e" stroke-width=".95" stroke-linejoin="round"/><path d="M5 10.200c.2.500.6.700 1 .700s.8-.2 1-.7" stroke="#6c707e" stroke-width=".9"/></svg>
<svg style="left:1206.7px;top:104.2px;" width="13.4" height="13.4" viewBox="0 0 12 12" fill="none"><path d="M1.200 8c-.4-2.600 1.200-4.800 3.800-4.800 1.600 0 2.400.7 3.200 1.200.9.500 2.100-.2 2.100-1.200 0-.6-.5-1-1-1" stroke="#6c707e" stroke-width=".95" stroke-linecap="round"/><path d="M1.200 8h1.600l.5-1.200h1.300l.5 1.200h1.500l.5-1.200h1.100c1.200 0 2-1 2-2.400" stroke="#6c707e" stroke-width=".95" stroke-linejoin="round"/></svg>
<svg style="left:1206.7px;top:128.9px;" width="13.4" height="13.4" viewBox="0 0 12 12" fill="none"><path d="M7.600 4V2.400c0-.6-.4-1-1-1H3c-.6 0-1 .4-1 1v7c0 .6.400 1 1 1h1.600" stroke="#6c707e" stroke-width=".95"/><path d="M5.600 10.600a2.800 2.800 0 0 1 5.600 0z" stroke="#6c707e" stroke-width=".9" stroke-linejoin="round"/><path d="M6.600 6.600l.8 1.200M10.200 6.600l-.8 1.200" stroke="#6c707e" stroke-width=".8" stroke-linecap="round"/></svg>
<svg style="left:1206.7px;top:153.3px;" width="13.4" height="13.4" viewBox="0 0 12 12" fill="none"><path d="M6.600 1.600H3c-.6 0-1 .4-1 1v7c0 .6.400 1 1 1h4" stroke="#6c707e" stroke-width=".95"/><rect x="5" y="5.600" width="5.600" height="3.400" stroke="#6c707e" stroke-width=".85"/><path d="M5 10.400h5.600" stroke="#6c707e" stroke-width=".85"/><circle cx="10" cy="2.200" r="1.700" fill="#3fae55"/></svg>
<svg style="left:1206.7px;top:177.70000000000002px;" width="13.4" height="13.4" viewBox="0 0 12 12" fill="none"><path d="M6 .8c.5 3 1.800 4.500 5.200 5.200C7.800 6.700 6.500 8.200 6 11.200 5.500 8.200 4.200 6.700.8 6 4.200 5.300 5.500 3.800 6 .8z" fill="#4a4d57"/></svg>
<div style="left:0;top:0;width:1280px;height:720px;clip-path:inset(99.5px 79.5px 49px 271.5px);">
<div style="left:271.5px;top:398.1px;width:929px;height:16.4px;background:#f2f5fc;"></div>
<div style="left:910.8px;top:99.5px;width:1px;height:572px;background:#edeef1;"></div>
<div style="left:324.25px;top:134.3255px;width:1px;height:560.422px;background:#e9eaee;"></div>
<div style="left:347.654px;top:134.3255px;width:1px;height:560.422px;background:#e9eaee;"></div>
<div style="left:371.058px;top:134.3255px;width:1px;height:560.422px;background:#e9eaee;"></div>
<div style="left:394.462px;top:134.3255px;width:1px;height:560.422px;background:#e9eaee;"></div>
<div style="left:417.866px;top:150.8085px;width:1px;height:16.483000000000004px;background:#e9eaee;"></div>
<div style="left:417.866px;top:200.25750000000002px;width:1px;height:16.483000000000004px;background:#e9eaee;"></div>
<div style="left:417.866px;top:249.70649999999998px;width:1px;height:445.04100000000005px;background:#e9eaee;"></div>
<div style="left:441.27px;top:282.6725px;width:1px;height:16.482999999999947px;background:#e9eaee;"></div>
<div style="left:441.27px;top:315.6385px;width:1px;height:379.10900000000004px;background:#e9eaee;"></div>
<div style="left:464.67400000000004px;top:332.1215000000001px;width:1px;height:362.626px;background:#e9eaee;"></div>
<div style="left:488.07800000000003px;top:365.08750000000003px;width:1px;height:181.31300000000005px;background:#e9eaee;"></div>
<div style="left:488.07800000000003px;top:562.8835px;width:1px;height:131.86400000000003px;background:#e9eaee;"></div>
<div style="left:511.482px;top:381.57050000000004px;width:1px;height:65.93199999999996px;background:#e9eaee;"></div>
<div style="left:511.482px;top:496.95150000000007px;width:1px;height:16.483000000000004px;background:#e9eaee;"></div>
<div style="left:511.482px;top:595.8495px;width:1px;height:16.482999999999947px;background:#e9eaee;"></div>
<div style="left:511.482px;top:628.8155px;width:1px;height:65.93200000000002px;background:#e9eaee;"></div>
<span class="ln" style="right:987.1px;top:153.35px;">92</span>
<span class="cl" style="left:442.57px;top:152.95px;"><i class="c">CircularProgressIndicator</i>(<i class="a">modifier =</i> Modifier.<i class="e">align</i>(Alignment.<i class="p">Center</i>))</span>
<span class="ln" style="right:987.1px;top:169.83px;">93</span>
<span class="cl" style="left:419.17px;top:169.43px;">}</span>
<span class="ln" style="right:987.1px;top:186.32px;">94</span>
<span class="cl" style="left:419.17px;top:185.92px;">userViewModel.<i class="p">userList</i>.isEmpty() -&gt; {</span>
<span class="ln" style="right:987.1px;top:202.80px;">95</span>
<span class="cl" style="left:442.57px;top:202.40px;"><i class="c">Text</i>(<i class="h" style="width:34.6px">text =</i><i class="s">&quot;There is no user&quot;</i>, <i class="a">modifier =</i> Modifier.<i class="e">align</i>(Alignment.<i class="p">Center</i>))</span>
<span class="ln" style="right:987.1px;top:219.28px;">96</span>
<span class="cl" style="left:419.17px;top:218.88px;">}</span>
<span class="ln" style="right:987.1px;top:235.77px;">97</span>
<span class="cl" style="left:419.17px;top:235.37px;"><i class="k">else</i> -&gt; {</span>
<span class="ln" style="right:987.1px;top:252.25px;">98</span>
<span class="ln" style="right:987.1px;top:268.73px;">99</span>
<span class="cl" style="left:442.57px;top:268.33px;"><i class="c">LazyColumn</i>(</span>
<span class="ln" style="right:987.1px;top:285.21px;">100</span>
<span class="cl" style="left:465.97px;top:284.81px;"><i class="a">modifier =</i> Modifier.<i class="e">fillMaxSize</i>()</span>
<span class="ln" style="right:987.1px;top:301.70px;">101</span>
<span class="cl" style="left:442.57px;top:301.30px;">) {</span>
<span class="ln" style="right:987.1px;top:318.18px;">102</span>
<span class="cl" style="left:465.97px;top:317.78px;"><i class="e">items</i>(<i class="h" style="width:41.1px">items =</i>userViewModel.<i class="p">userList</i>){ <i class="hp">user</i> -&gt;</span>
<span class="ln" style="right:987.1px;top:334.66px;">103</span>
<span class="ln" style="right:987.1px;top:351.15px;">104</span>
<span class="cl" style="left:489.38px;top:350.75px;"><i class="c">Card</i>(</span>
<span class="ln" style="right:987.1px;top:367.63px;">105</span>
<span class="cl" style="left:512.78px;top:367.23px;"><i class="a">onClick =</i> {</span>
<span class="ln" style="right:987.1px;top:384.11px;">106</span>
<span class="ln" style="right:987.1px;top:400.60px;">107</span>
<span class="cl" style="left:536.19px;top:400.19px;">userViewModel.<i class="p">selectedUser</i> = <i class="hv">user</i></span>
<span class="ln" style="right:987.1px;top:417.08px;">108</span>
<span class="cl" style="left:536.19px;top:416.68px;">navController.navigate(<i class="h" style="width:40.9px">route =</i>UserEnums.<i class="pi">ADD_USER_PAGE</i>.<i class="p">route</i>)</span>
<span class="ln" style="right:987.1px;top:433.56px;">109</span>
<span class="ln" style="right:987.1px;top:450.04px;">110</span>
<span class="cl" style="left:512.78px;top:449.64px;">},</span>
<span class="ln" style="right:987.1px;top:466.53px;">111</span>
<span class="cl" style="left:512.78px;top:466.13px;"><i class="a">modifier =</i> Modifier.<i class="e">fillMaxWidth</i>().<i class="e">padding</i>(<i class="a">top =</i> <i class="n">3</i>.<i class="pi">dp</i>, <i class="a">start =</i> <i class="n">3</i>.<i class="pi">dp</i>, <i class="a">end =</i> <i class="n">3</i>.<i class="pi">dp</i>),</span>
<span class="ln" style="right:987.1px;top:483.01px;">112</span>
<span class="cl" style="left:512.78px;top:482.61px;"><i class="a">colors =</i> CardDefaults.<i class="c">cardColors</i>(</span>
<span class="ln" style="right:987.1px;top:499.49px;">113</span>
<span class="cl" style="left:536.19px;top:499.09px;"><i class="a">containerColor =</i> MaterialTheme.<i class="c">colorScheme</i>.<i class="p">primary</i></span>
<span class="ln" style="right:987.1px;top:515.98px;">114</span>
<span class="cl" style="left:512.78px;top:515.58px;">),</span>
<span class="ln" style="right:987.1px;top:532.46px;">115</span>
<span class="cl" style="left:512.78px;top:532.06px;"><i class="a">shape =</i> <i class="e">RoundedCornerShape</i>(<i class="h" style="width:34.2px">size =</i><i class="n">8</i>.<i class="pi">dp</i>)</span>
<span class="ln" style="right:987.1px;top:548.94px;">116</span>
<span class="cl" style="left:489.38px;top:548.54px;">) {</span>
<span class="ln" style="right:987.1px;top:565.42px;">117</span>
<span class="ln" style="right:987.1px;top:581.91px;">118</span>
<span class="cl" style="left:512.78px;top:581.51px;"><i class="c">Column</i>(</span>
<span class="ln" style="right:987.1px;top:598.39px;">119</span>
<span class="cl" style="left:536.19px;top:597.99px;"><i class="a">modifier =</i> Modifier.<i class="e">fillMaxSize</i>().<i class="e">padding</i>(<i class="h" style="width:26.3px">all =</i><i class="n">16</i>.<i class="pi">dp</i>)</span>
<span class="ln" style="right:987.1px;top:614.87px;">120</span>
<span class="cl" style="left:512.78px;top:614.47px;">) {</span>
<span class="ln" style="right:987.1px;top:631.36px;">121</span>
<span class="cl" style="left:536.19px;top:630.96px;"><i class="c">Text</i>(<i class="a">text =</i> <i class="hv">user</i>.<i class="p">userName</i>, <i class="a">style =</i> MaterialTheme.<i class="c">typography</i>.<i class="p">titleLarge</i>, <i class="a">color =</i> MaterialTheme.<i class="c">colorScheme</i>.<i class="p">onPrimary</i>)</span>
<span class="ln" style="right:987.1px;top:647.84px;">122</span>
<span class="cl" style="left:536.19px;top:647.44px;"><i class="c">Spacer</i>(Modifier.<i class="e">height</i>(<i class="h" style="width:45.8px">height =</i><i class="n">3</i>.<i class="pi">dp</i>))</span>
<span class="ln" style="right:987.1px;top:664.32px;">123</span>
<span style="left:479px;top:352px;width:320px;text-align:center;font-size:15px;line-height:16px;color:rgba(255,255,255,.5);-webkit-text-stroke:.7px rgba(125,125,130,.19);transform:rotate(-44deg);letter-spacing:.25px;">Copyright © 2026 - www.p30download.com</span>
<div style="left:618.5px;top:410.595px;width:69.61200000000001px;height:1px;background:#b9bac4;"></div>
<svg style="left:706.16px;top:410.55px;" width="23.8" height="2.6" viewBox="0 0 23.8 2.6" fill="none"><path d="M0.0 0.5L1.3 2.0L2.6 0.5L3.9 2.0L5.2 0.5L6.5 2.0L7.8 0.5L9.1 2.0L10.4 0.5L11.7 2.0L13.0 0.5L14.3 2.0L15.6 0.5L16.9 2.0L18.2 0.5L19.5 2.0L20.8 0.5L22.1 2.0" stroke="#e5404f" stroke-width="0.8"/></svg>
<div style="left:606.398px;top:661.8px;width:23.404px;height:3px;background:#ece8fb;"></div>
<svg style="left:330.6px;top:401.6px;" width="8" height="10" viewBox="0 0 8 10" fill="none"><path d="M4 .7a2.900 2.900 0 0 0-1.500 5.400v1h3v-1A2.900 2.900 0 0 0 4 .7z" fill="#e55765"/><path d="M2.700 8.300h2.600" stroke="#e55765" stroke-width=".9"/><path d="M4 2.200v2" stroke="#fff" stroke-width=".8"/><circle cx="4" cy="5.100" r=".45" fill="#fff"/></svg>
<div style="left:729.2px;top:399.7px;width:1.2px;height:13.5px;background:#000;"></div>
<svg style="left:685.5px;top:400.5px;" width="5" height="12" viewBox="0 0 5 12" fill="none"><path d="M.5.600c1 0 1.600.3 2 .9.400-.6 1-.9 2-.9M.5 11.400c1 0 1.600-.3 2-.9.400.6 1 .9 2 .9M2.500 1.500v9" stroke="#333" stroke-width=".7"/></svg>
<div style="left:271.5px;top:99.5px;width:929px;height:50.2px;background:#ffffff;box-shadow:0 1px 3px rgba(0,0,0,.13);border-bottom:1px solid #e3e4e8;"></div>
<span class="ln" style="right:987.1px;top:102.90px;">48</span>
<span class="cl" style="left:325.55px;top:102.50px;"><i class="k">fun</i> <i class="f">UserListingScreen</i>(</span>
<span class="ln" style="right:987.1px;top:119.30px;">83</span>
<span class="cl" style="left:348.95px;top:118.90px;">) { innerPadding -&gt;</span>
<span class="ln" style="right:987.1px;top:135.80px;">89</span>
<span class="cl" style="left:372.36px;top:135.40px;">) {</span>
<svg style="left:1141.3px;top:104px;" width="8.6" height="8.6" viewBox="0 0 8.6 8.6" fill="none"><circle cx="4.300" cy="4.300" r="3.900" fill="#e55765"/><path d="M4.300 2.100v2.600" stroke="#fff" stroke-width="1"/><circle cx="4.300" cy="6.100" r=".55" fill="#fff"/></svg>
<span style="top:101.80px;font-size:8.4px;color:#6c707e;left:1150.60px;">1</span>
<svg style="left:1158.2px;top:103.8px;" width="9.4" height="8.8" viewBox="0 0 9.4 8.8" fill="none"><path d="M4.700.900l4 7H.7z" fill="#f2bf57" stroke="#f2bf57" stroke-width=".8" stroke-linejoin="round"/><path d="M4.700 3.400v2.400" stroke="#fff" stroke-width=".95"/><circle cx="4.700" cy="6.900" r=".5" fill="#fff"/></svg>
<span style="top:101.80px;font-size:8.4px;color:#6c707e;left:1167.80px;">1</span>
<svg style="left:1177.2px;top:105.8px;" width="7" height="5" viewBox="0 0 7 5" fill="none"><path d="M1 4l2.500-2.500L6 4" stroke="#818594" stroke-width=".9"/></svg>
<svg style="left:1189.8px;top:105.8px;" width="7" height="5" viewBox="0 0 7 5" fill="none"><path d="M1 1l2.500 2.500L6 1" stroke="#818594" stroke-width=".9"/></svg>
<div style="left:1192.5px;top:124.4px;width:8.5px;height:1.6px;background:#f2bf57;"></div>
<div style="left:1192.3px;top:411.0px;width:8.4px;height:1px;background:#c77dde;"></div>
<div style="left:1192.3px;top:432.0px;width:8.4px;height:1px;background:#c77dde;"></div>
<div style="left:1192.3px;top:492.0px;width:8.4px;height:1px;background:#c77dde;"></div>
<div style="left:1192.3px;top:499.5px;width:8.4px;height:1px;background:#c77dde;"></div>
<div style="left:1192.3px;top:508.5px;width:8.4px;height:1px;background:#c77dde;"></div>
<div style="left:1193.6px;top:356.5px;width:5px;height:143.5px;background:rgba(115,118,130,.38);border-radius:2.500px;"></div>
<div style="left:325px;top:662.6px;width:876px;height:8.6px;background:#f3f4f5;"></div>
<div style="left:327.5px;top:664.5px;width:785px;height:4.6px;background:#c6c9d0;border-radius:2.300px;"></div>
</div>
<svg style="left:62.4px;top:677.4px;" width="6" height="6" viewBox="0 0 6 6" fill="none"><rect x=".7" y=".7" width="4.400" height="4.400" rx=".5" fill="#e7effd" stroke="#4682eb" stroke-width="1"/></svg>
<span style="top:673.60px;font-size:8.6px;color:#6c707e;left:70.30px;letter-spacing:-0.095px;">FirebaseWithCompose</span>
<svg style="left:161px;top:676.9px;" width="5" height="7" viewBox="0 0 5 7" fill="none"><path d="M1 1l2.300 2.500L1 6" stroke="#a1a4ad" stroke-width=".85"/></svg>
<svg style="left:170.8px;top:677.4px;" width="6" height="6" viewBox="0 0 6 6" fill="none"><rect x=".7" y=".7" width="4.400" height="4.400" rx=".5" fill="#e7effd" stroke="#4682eb" stroke-width="1"/></svg>
<span style="top:673.60px;font-size:8.6px;color:#6c707e;left:178.00px;letter-spacing:0.131px;">app</span>
<svg style="left:197.4px;top:676.9px;" width="5" height="7" viewBox="0 0 5 7" fill="none"><path d="M1 1l2.300 2.500L1 6" stroke="#a1a4ad" stroke-width=".85"/></svg>
<span style="top:673.60px;font-size:8.6px;color:#6c707e;left:206.90px;letter-spacing:0.022px;">src</span>
<svg style="left:223.6px;top:676.9px;" width="5" height="7" viewBox="0 0 5 7" fill="none"><path d="M1 1l2.300 2.500L1 6" stroke="#a1a4ad" stroke-width=".85"/></svg>
<svg style="left:232.70000000000002px;top:677.4px;" width="6" height="6" viewBox="0 0 6 6" fill="none"><rect x=".7" y=".7" width="4.400" height="4.400" rx=".5" fill="#e7effd" stroke="#4682eb" stroke-width="1"/></svg>
<span style="top:673.60px;font-size:8.6px;color:#6c707e;left:240.00px;letter-spacing:-0.142px;">main</span>
<svg style="left:263px;top:676.9px;" width="5" height="7" viewBox="0 0 5 7" fill="none"><path d="M1 1l2.300 2.500L1 6" stroke="#a1a4ad" stroke-width=".85"/></svg>
<span style="top:673.60px;font-size:8.6px;color:#6c707e;left:272.50px;letter-spacing:-0.322px;">java</span>
<svg style="left:292.4px;top:676.9px;" width="5" height="7" viewBox="0 0 5 7" fill="none"><path d="M1 1l2.300 2.500L1 6" stroke="#a1a4ad" stroke-width=".85"/></svg>
<span style="top:673.60px;font-size:8.6px;color:#6c707e;left:302.20px;letter-spacing:-0.117px;">com</span>
<svg style="left:323px;top:676.9px;" width="5" height="7" viewBox="0 0 5 7" fill="none"><path d="M1 1l2.300 2.500L1 6" stroke="#a1a4ad" stroke-width=".85"/></svg>
<span style="top:673.60px;font-size:8.6px;color:#6c707e;left:332.50px;letter-spacing:-0.203px;">oakacademy</span>
<svg style="left:384.6px;top:676.9px;" width="5" height="7" viewBox="0 0 5 7" fill="none"><path d="M1 1l2.300 2.500L1 6" stroke="#a1a4ad" stroke-width=".85"/></svg>
<span style="top:673.60px;font-size:8.6px;color:#6c707e;left:394.30px;letter-spacing:0.065px;">firebasewithcompose</span>
<svg style="left:481.7px;top:676.9px;" width="5" height="7" viewBox="0 0 5 7" fill="none"><path d="M1 1l2.300 2.500L1 6" stroke="#a1a4ad" stroke-width=".85"/></svg>
<span style="top:673.60px;font-size:8.6px;color:#6c707e;left:491.20px;letter-spacing:0.111px;">ui</span>
<svg style="left:503px;top:676.9px;" width="5" height="7" viewBox="0 0 5 7" fill="none"><path d="M1 1l2.300 2.500L1 6" stroke="#a1a4ad" stroke-width=".85"/></svg>
<span style="top:673.60px;font-size:8.6px;color:#6c707e;left:512.60px;letter-spacing:-0.015px;">screens</span>
<svg style="left:547.3px;top:676.9px;" width="5" height="7" viewBox="0 0 5 7" fill="none"><path d="M1 1l2.300 2.500L1 6" stroke="#a1a4ad" stroke-width=".85"/></svg>
<svg style="left:557.6px;top:675.6px;" width="9" height="9" viewBox="0 0 9 9" fill="none"><path d="M.9.900h7L4.600 4.400l3.300 3.500H.9z" fill="#faf5ff" stroke="#a968ec" stroke-width=".95" stroke-linejoin="round"/></svg>
<span style="top:673.60px;font-size:8.6px;color:#6c707e;left:570.00px;letter-spacing:0.032px;">UserListingScreen.kt</span>
<svg style="left:655px;top:676.9px;" width="5" height="7" viewBox="0 0 5 7" fill="none"><path d="M1 1l2.300 2.500L1 6" stroke="#a1a4ad" stroke-width=".85"/></svg>
<svg style="left:664.4px;top:675.3px;" width="10" height="10" viewBox="0 0 10 10" fill="none"><circle cx="4.800" cy="4.800" r="3.900" stroke="#6c707e" stroke-width=".85"/><path d="M2.600 3.300l2.200 1.200 2.200-1.200M4.800 4.500v2.800" stroke="#6c707e" stroke-width=".75"/></svg>
<span style="top:673.60px;font-size:8.6px;color:#6c707e;left:676.80px;letter-spacing:-0.051px;">UserListingScreen</span>
<span style="top:673.60px;font-size:8.4px;color:#6c707e;left:1051.50px;letter-spacing:-0.143px;">107:70</span>
<span style="top:673.60px;font-size:8.4px;color:#6c707e;left:1086.00px;letter-spacing:-0.374px;">LF</span>
<span style="top:673.60px;font-size:8.4px;color:#6c707e;left:1105.00px;letter-spacing:0.168px;">UTF-8</span>
<svg style="left:1139.5px;top:674.9px;" width="10" height="10" viewBox="0 0 10 10" fill="none"><path d="M5.600.800l3.600 3.600-2.800 1.400-1.700 3-1-1-2.500 2 2-2.500-1-1 3-1.700z" fill="#4a4d57"/><circle cx="6.500" cy="3.500" r=".8" fill="#f7f8fa"/></svg>
<span style="top:673.60px;font-size:8.4px;color:#6c707e;left:1161.00px;letter-spacing:0.126px;">4 spaces</span>
<svg style="left:1205.5px;top:675.1px;" width="10" height="9" viewBox="0 0 10 9" fill="none"><rect x="1" y="3.900" width="5.600" height="4.200" rx=".7" stroke="#6c707e" stroke-width=".85"/><path d="M5.200 3.900V2.500a1.700 1.700 0 0 1 3.400 0v.9" stroke="#6c707e" stroke-width=".85"/><path d="M3.800 5.300v1.400" stroke="#6c707e" stroke-width=".8"/></svg>
</div>
<span style="position:absolute;left:1228.6px;top:696.4px;font-size:14.1px;line-height:16px;color:rgba(255,255,255,.74);letter-spacing:0;white-space:pre;">ûdemy</span>
</body></html>
